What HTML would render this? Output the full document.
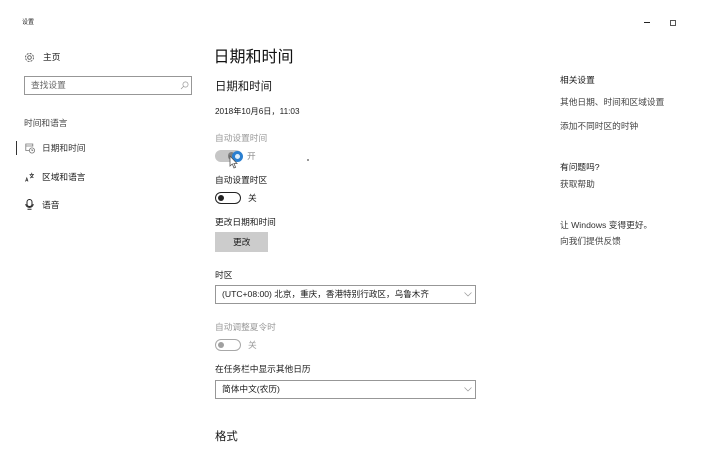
<!DOCTYPE html>
<html lang="zh-CN">
<head>
<meta charset="utf-8">
<style>
html,body{margin:0;padding:0;width:704px;height:458px;overflow:hidden;background:#fff}
body{position:relative;font-family:"Liberation Sans","Noto Sans CJK SC",sans-serif;color:#1a1a1a}
.t{position:absolute;white-space:nowrap;font-size:8.7px;line-height:12px;filter:blur(.35px)}
.g{color:#444}
.l{color:#999}
.box{position:absolute;box-sizing:border-box;border:1px solid #979797;background:#fff}
.sw{position:absolute;box-sizing:border-box;width:26px;height:12px;border-radius:6px;border:1.5px solid #222;filter:blur(.25px)}
.sw i{position:absolute;left:2px;top:1.500px;width:6px;height:6px;border-radius:50%;background:#222}
svg{position:absolute;overflow:visible;filter:blur(.2px)}
</style>
</head>
<body>
<div class="t" style="left:22px;top:18px;font-size:6px;line-height:10px">设置</div>
<div style="position:absolute;left:644px;top:22px;width:6px;height:1px;background:#222"></div>
<div style="position:absolute;left:670px;top:20px;width:6px;height:6px;box-sizing:border-box;border:1px solid #555"></div>

<svg style="left:24px;top:52px" width="11" height="11" viewBox="0 0 11 11" fill="none" stroke="#555" stroke-width=".9"><circle cx="5.500" cy="5.500" r="1.800"/><circle cx="5.500" cy="5.500" r="4" stroke-dasharray="2 1.150"/></svg>
<div class="t" style="left:43px;top:51px">主页</div>

<div class="box" style="left:24px;top:76px;width:168px;height:19px"></div>
<div class="t g" style="left:31px;top:79px;color:#666">查找设置</div>
<svg style="left:180px;top:81px" width="9" height="9" viewBox="0 0 9 9" fill="none" stroke="#999" stroke-width=".7"><circle cx="5.500" cy="3.500" r="2.600"/><path d="M3.600 5.400L1 8"/></svg>

<div class="t g" style="left:24px;top:117px">时间和语言</div>

<div style="position:absolute;left:16px;top:141px;width:1px;height:14px;background:#333"></div>
<svg style="left:25px;top:143px" width="11" height="11" viewBox="0 0 11 11" fill="none" stroke="#777" stroke-width=".8"><path d="M4 7.500H.8V1h7v2.500M.8 3h7"/><circle cx="7" cy="7.500" r="2.600"/><path d="M7 6v1.600h1.200"/></svg>
<div class="t" style="left:42px;top:142px;color:#333">日期和时间</div>

<svg style="left:25px;top:172px" width="10" height="10" viewBox="0 0 10 10" fill="none" stroke="#333" stroke-width=".8"><path d="M.5 9.500L1.800 6 3 9.500M1 8.400h1.700M4.500 2.500h4.500M6.700.8v1.700M8 2.500C7.600 4.500 6.400 5.500 5 6M5.500 3c.5 1.300 1.600 2.300 3 2.700"/></svg>
<div class="t" style="left:42px;top:171px">区域和语言</div>

<svg style="left:25px;top:199px" width="9" height="11" viewBox="0 0 9 11" fill="none" stroke="#222" stroke-width="1"><rect x="2" y=".5" width="5" height="7" rx="2.500"/><path d="M.8 5c0 4.500 7.400 4.500 7.400 0M2.500 10.300h4"/></svg>
<div class="t" style="left:42px;top:199px">语音</div>

<div class="t" style="left:213.500px;top:48px;font-size:16px;line-height:20px;color:#111">日期和时间</div>
<div class="t" style="left:215px;top:80px;font-size:11.400px;line-height:14px">日期和时间</div>
<div class="t" style="left:215px;top:106px;font-size:8.200px">2018年10月6日，11:03</div>

<div class="t l" style="left:215px;top:132px">自动设置时间</div>
<div style="position:absolute;left:215px;top:150px;width:27px;height:12px;border-radius:6px;background:#c6c6c6;filter:blur(.3px)"></div>
<div style="position:absolute;left:228px;top:152px;width:7px;height:8px;border-radius:4px;background:#808080;filter:blur(.3px)"></div>
<div style="position:absolute;left:232px;top:151px;width:11px;height:11px;box-sizing:border-box;border-radius:50%;border:3px solid #2a7fd0;background:#dfeefa;filter:blur(.3px)"></div>
<svg style="left:229px;top:155px" width="10" height="14" viewBox="0 0 10 14"><path d="M1 1v10l2.300-2 1.700 4 1.600-.7-1.700-3.800H8z" fill="#fff" stroke="#555" stroke-width=".8"/></svg>
<div class="t l" style="left:247px;top:150px;color:#8c8c8c">开</div>
<div style="position:absolute;left:307px;top:159px;width:2px;height:2px;background:#999"></div>

<div class="t" style="left:215px;top:174px">自动设置时区</div>
<div class="sw" style="left:215px;top:192px"><i></i></div>
<div class="t" style="left:248px;top:192px">关</div>

<div class="t" style="left:215px;top:216px">更改日期和时间</div>
<div style="position:absolute;left:215px;top:232px;width:53px;height:20px;background:#cccccc"></div>
<div class="t" style="left:233px;top:236px">更改</div>

<div class="t" style="left:215px;top:269px">时区</div>
<div class="box" style="left:215px;top:285px;width:261px;height:19px"></div>
<div class="t" style="left:222px;top:288px;font-size:8.600px">(UTC+08:00) 北京，重庆，香港特别行政区，乌鲁木齐</div>
<svg style="left:464px;top:292px" width="8" height="5" viewBox="0 0 8 5" fill="none" stroke="#999" stroke-width=".7"><path d="M.5.5L4 4 7.500.5"/></svg>

<div class="t l" style="left:215px;top:321px">自动调整夏令时</div>
<div class="sw" style="left:215px;top:339px;border-color:#a8a8a8"><i style="background:#a0a0a0"></i></div>
<div class="t l" style="left:248px;top:339px">关</div>

<div class="t" style="left:215px;top:363px">在任务栏中显示其他日历</div>
<div class="box" style="left:215px;top:380px;width:261px;height:19px"></div>
<div class="t" style="left:222px;top:383px">简体中文(农历)</div>
<svg style="left:464px;top:387px" width="8" height="5" viewBox="0 0 8 5" fill="none" stroke="#999" stroke-width=".7"><path d="M.5.5L4 4 7.500.5"/></svg>

<div class="t" style="left:215px;top:430px;font-size:11.400px;line-height:14px">格式</div>

<div class="t" style="left:560px;top:74px">相关设置</div>
<div class="t g" style="left:560px;top:96px">其他日期、时间和区域设置</div>
<div class="t g" style="left:560px;top:120px">添加不同时区的时钟</div>
<div class="t" style="left:560px;top:161px">有问题吗?</div>
<div class="t g" style="left:560px;top:178px">获取帮助</div>
<div class="t" style="left:560px;top:219px;color:#333">让 Windows 变得更好。</div>
<div class="t g" style="left:560px;top:235px">向我们提供反馈</div>
</body>
</html>
